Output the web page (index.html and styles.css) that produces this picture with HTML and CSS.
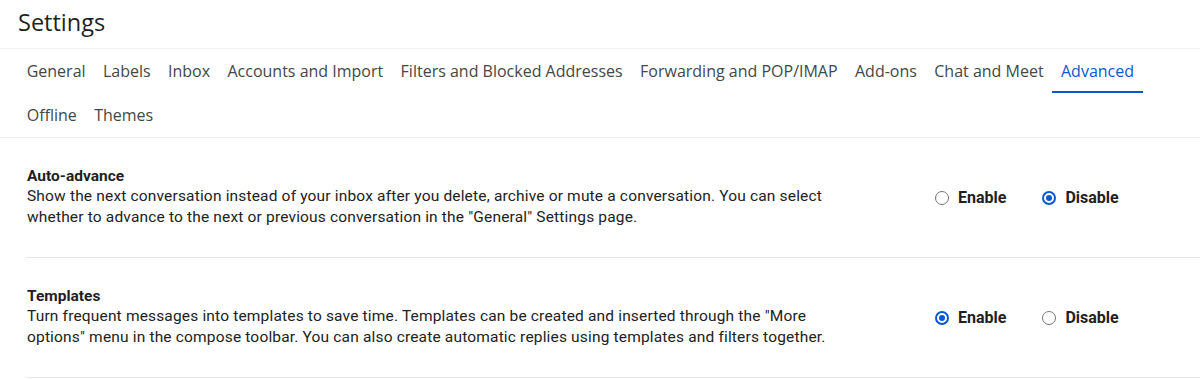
FILE: index.html
```html
<!DOCTYPE html>
<html lang="en">
<head>
    <meta charset="UTF-8">
    <title>Settings</title>
    <link rel="stylesheet" href="styles.css">
</head>
<body>
    <div class="page">
        <h1 class="title">Settings</h1>
        <div class="tabs">
            <a class="tab">General</a>
            <a class="tab">Labels</a>
            <a class="tab">Inbox</a>
            <a class="tab">Accounts and Import</a>
            <a class="tab">Filters and Blocked Addresses</a>
            <a class="tab">Forwarding and POP/IMAP</a>
            <a class="tab">Add-ons</a>
            <a class="tab">Chat and Meet</a>
            <a class="tab active">Advanced</a>
            <a class="tab">Offline</a>
            <a class="tab">Themes</a>
        </div>
        <div class="sections">
            <div class="section">
                <div class="info">
                    <div class="name">Auto-advance</div>
                    <div class="desc">Show the next conversation instead of your inbox after you delete, archive or mute a conversation. You can select whether to advance to the next or previous conversation in the "General" Settings page.</div>
                </div>
                <div class="options">
                    <label class="option"><span class="radio"></span>Enable</label>
                    <label class="option"><span class="radio checked"></span>Disable</label>
                </div>
            </div>
            <div class="section">
                <div class="info">
                    <div class="name">Templates</div>
                    <div class="desc">Turn frequent messages into templates to save time. Templates can be created and inserted through the "More options" menu in the compose toolbar. You can also create automatic replies using templates and filters together.</div>
                </div>
                <div class="options">
                    <label class="option"><span class="radio checked"></span>Enable</label>
                    <label class="option"><span class="radio"></span>Disable</label>
                </div>
            </div>
        </div>
    </div>
</body>
</html>
```

FILE: styles.css
```css
body {
    margin: 0;
    background: #fff;
    font-family: Roboto, Arial, sans-serif;
    color: #1f1f1f;
}
.title {
    margin: 0;
    padding: 8px 0 0 18px;
    height: 40px;
    font-family: "Open Sans", Roboto, sans-serif;
    font-weight: 400;
    font-size: 23.5px;
    line-height: 28px;
    color: #1f1f1f;
    border-bottom: 1px solid #f1f1f1;
}
.tabs {
    display: flex;
    flex-wrap: wrap;
    padding: 0 0 0 18px;
    border-bottom: 1px solid #eceded;
}
.tab {
    height: 44px;
    padding: 2px 8.7px 0;
    box-sizing: border-box;
    display: flex;
    align-items: center;
    font-family: "Open Sans", Roboto, sans-serif;
    font-size: 16px;
    color: #444746;
    border-bottom: 2px solid transparent;
}
.tab.active {
    color: #0b57d0;
    border-bottom-color: #0b57d0;
}
.sections {
    padding-left: 26px;
}
.section {
    display: flex;
    padding: 28px 0 29px 1px;
    border-bottom: 1px solid #e6e6e6;
    font-size: 15.5px;
}
.info {
    width: 820px;
}
.name {
    font-weight: 700;
    line-height: 20px;
}
.desc {
    line-height: 21px;
    letter-spacing: 0.17px;
    color: #222;
}
.options {
    display: flex;
    gap: 36px;
    margin: 21px 0 0 88px;
    height: 21px;
}
.option {
    display: flex;
    align-items: center;
    font-weight: 700;
    font-size: 16px;
    color: #1f1f1f;
}
.radio {
    width: 14px;
    height: 14px;
    box-sizing: border-box;
    border: 1px solid #747775;
    border-radius: 50%;
    margin-right: 9px;
    position: relative;
}
.radio.checked {
    border: 2px solid #0b57d0;
}
.radio.checked::after {
    content: "";
    position: absolute;
    left: 2px;
    top: 2px;
    width: 6px;
    height: 6px;
    border-radius: 50%;
    background: #0b57d0;
}
```
